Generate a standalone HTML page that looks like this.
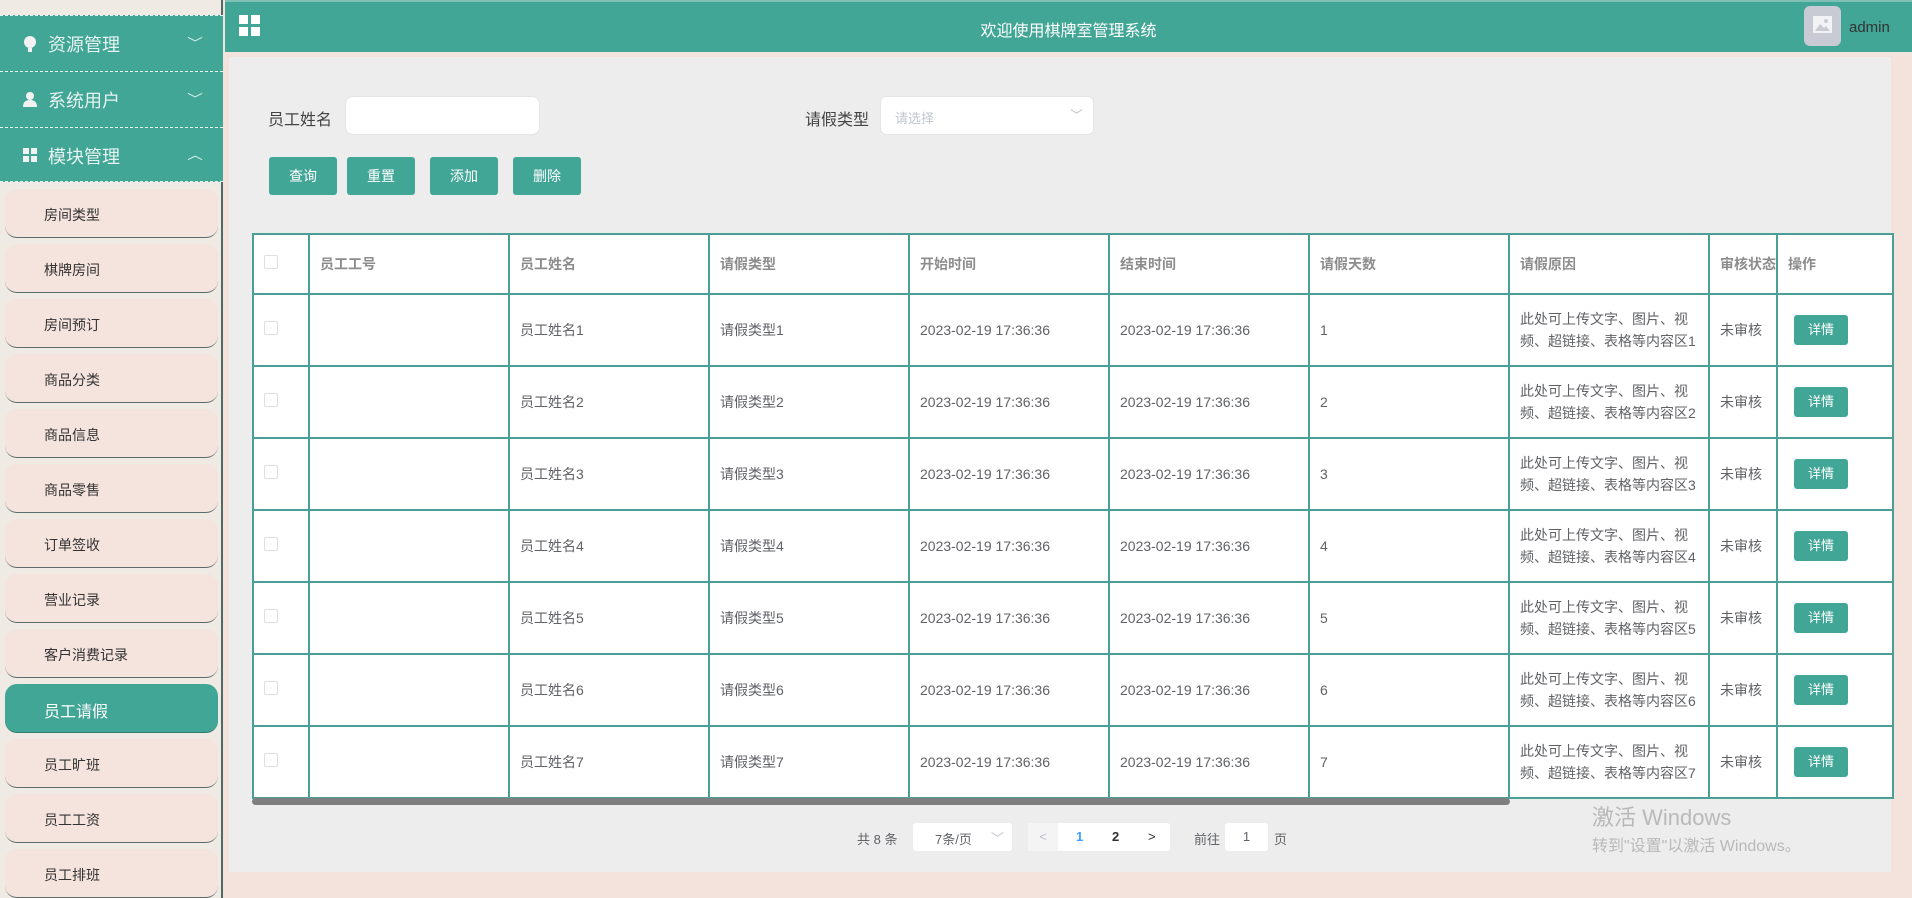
<!DOCTYPE html>
<html><head><meta charset="utf-8"><style>
*{box-sizing:border-box;margin:0;padding:0}
body{width:1912px;height:898px;overflow:hidden;font-family:"Liberation Sans","Noto Sans CJK SC",sans-serif;background:#f4e2dc;position:relative;color:#606266}
.side{position:absolute;left:0;top:0;width:223px;height:898px;background:#efeae3;border-right:2px solid #4d6a66}
.mh{position:absolute;left:0;width:223px;height:56px;background:#42a697;color:#e6f2ef;font-size:18px;border-top:1px dashed #e8f4f1}
.mh span{position:absolute;left:48px;top:15px}
.mh i{position:absolute;left:22px;top:19px;width:16px;height:16px}
.mh b{position:absolute;right:22px;top:18px;font-weight:normal;font-size:12px;transform:scaleX(1.3)}
.sub{position:absolute;left:5px;width:213px;height:49px;background:#f5e3dd;border-radius:12px;border-bottom:1.5px solid #5c6c6a;font-size:14px;color:#333}
.sub span{position:absolute;left:39px;top:16px}
.sub.act{background:#42a697;color:#fff;font-size:16px;border-bottom:1.5px solid #35796f}
.sub.act span{top:14px}
.top{position:absolute;left:225px;top:0;width:1687px;height:52px;background:#42a697;border-top:2px solid #7fbfb5}
.title{position:absolute;left:0;width:1687px;top:15px;text-align:center;color:#fff;font-size:16px}
.panel{position:absolute;left:229px;top:57px;width:1662px;height:815px;background:#ededed}
.lbl{position:absolute;font-size:16px;color:#444}
.inp{position:absolute;background:#fff;border:1px solid #e4e4e4;border-radius:8px}
.btn{position:absolute;top:157px;height:38px;width:68px;background:#42a697;color:#fff;font-size:14px;text-align:center;line-height:38px;border-radius:3px}
table{position:absolute;left:252px;top:233px;border-collapse:collapse;background:#fff;font-size:14px;table-layout:fixed}
td{border:2px solid #4a9f96;height:72px;padding-left:10px;vertical-align:middle;color:#606266;line-height:22px;white-space:nowrap;overflow:hidden}
tr.h td{height:60px;color:#8c8c8c;font-weight:bold}
.cb{display:inline-block;width:14px;height:14px;border:1px solid #dcdfe6;border-radius:2px;background:#fff}
.det{display:inline-block;background:#42a697;color:#fff;font-size:13px;width:54px;height:30px;line-height:30px;text-align:center;border-radius:3px;margin-left:6px}
.pg{position:absolute;top:825px;font-size:13px;color:#606266}
.wm{position:absolute;left:1592px;color:#b9b9b9}
</style></head><body>
<div class="side">
<div class="mh" style="top:15px"><i><svg width="16" height="18" viewBox="0 0 16 18"><circle cx="8" cy="7" r="6" fill="#f2f2f2"/><rect x="6" y="13" width="4" height="4" fill="#f2f2f2"/></svg></i><span>资源管理</span><b>﹀</b></div>
<div class="mh" style="top:71px"><i><svg width="16" height="16" viewBox="0 0 16 16"><circle cx="8" cy="5" r="4" fill="#f2f2f2"/><path d="M1 16 Q1 9 8 9 Q15 9 15 16Z" fill="#f2f2f2"/></svg></i><span>系统用户</span><b>﹀</b></div>
<div class="mh" style="top:127px;height:55px;border-bottom:1px dashed #e8f4f1"><i><svg width="16" height="16"><rect x="1" y="1" width="6" height="6" fill="#f2f2f2"/><rect x="9" y="1" width="6" height="6" fill="#f2f2f2"/><rect x="1" y="9" width="6" height="6" fill="#f2f2f2"/><rect x="9" y="9" width="6" height="6" fill="#f2f2f2"/></svg></i><span>模块管理</span><b>︿</b></div>
<div class="sub" style="top:189px"><span>房间类型</span></div>
<div class="sub" style="top:244px"><span>棋牌房间</span></div>
<div class="sub" style="top:299px"><span>房间预订</span></div>
<div class="sub" style="top:354px"><span>商品分类</span></div>
<div class="sub" style="top:409px"><span>商品信息</span></div>
<div class="sub" style="top:464px"><span>商品零售</span></div>
<div class="sub" style="top:519px"><span>订单签收</span></div>
<div class="sub" style="top:574px"><span>营业记录</span></div>
<div class="sub" style="top:629px"><span>客户消费记录</span></div>
<div class="sub act" style="top:684px"><span>员工请假</span></div>
<div class="sub" style="top:739px"><span>员工旷班</span></div>
<div class="sub" style="top:794px"><span>员工工资</span></div>
<div class="sub" style="top:849px"><span>员工排班</span></div>
</div>
<div class="top">
<svg style="position:absolute;left:14px;top:13px" width="22" height="22"><rect x="0" y="0" width="9" height="9" fill="#fff"/><rect x="12" y="0" width="9" height="9" fill="#fff"/><rect x="0" y="12" width="9" height="9" fill="#fff"/><rect x="12" y="12" width="9" height="9" fill="#fff"/></svg>
<div class="title">欢迎使用棋牌室管理系统</div>
<div style="position:absolute;left:1579px;top:4px;width:37px;height:40px;background:#c8cbd3;border-radius:6px"><svg style="position:absolute;left:9px;top:10px" width="19" height="17"><rect x="0" y="0" width="19" height="17" fill="#f3f3f5"/><path d="M2 15 L7 8 L11 12 L13 10 L17 15Z" fill="#c8cbd3"/><circle cx="13" cy="5" r="2" fill="#c8cbd3"/></svg></div>
<div style="position:absolute;left:1624px;top:17px;font-size:15px;color:#333">admin</div>
</div>
<div class="panel"></div>
<div class="lbl" style="left:268px;top:106px">员工姓名</div>
<div class="inp" style="left:345px;top:96px;width:195px;height:39px"></div>
<div class="lbl" style="left:805px;top:106px">请假类型</div>
<div class="inp" style="left:880px;top:96px;width:214px;height:39px;border-radius:6px"><span style="position:absolute;left:14px;top:11px;font-size:13px;color:#c0c4cc">请选择</span><span style="position:absolute;right:10px;top:8px;font-size:13px;color:#c0c4cc">﹀</span></div>
<div class="btn" style="left:269px">查询</div>
<div class="btn" style="left:347px">重置</div>
<div class="btn" style="left:430px">添加</div>
<div class="btn" style="left:513px">删除</div>
<table>
<colgroup><col style="width:56px"><col style="width:200px"><col style="width:200px"><col style="width:200px"><col style="width:200px"><col style="width:200px"><col style="width:200px"><col style="width:200px"><col style="width:60px"><col style="width:116px"></colgroup>
<tr class="h"><td><span class="cb"></span></td><td>员工工号</td><td>员工姓名</td><td>请假类型</td><td>开始时间</td><td>结束时间</td><td>请假天数</td><td>请假原因</td><td>审核状态</td><td>操作</td></tr>
<tr><td><span class="cb"></span></td><td></td><td>员工姓名1</td><td>请假类型1</td><td>2023-02-19 17:36:36</td><td>2023-02-19 17:36:36</td><td>1</td><td>此处可上传文字、图片、视<br>频、超链接、表格等内容区1</td><td>未审核</td><td><span class="det">详情</span></td></tr>
<tr><td><span class="cb"></span></td><td></td><td>员工姓名2</td><td>请假类型2</td><td>2023-02-19 17:36:36</td><td>2023-02-19 17:36:36</td><td>2</td><td>此处可上传文字、图片、视<br>频、超链接、表格等内容区2</td><td>未审核</td><td><span class="det">详情</span></td></tr>
<tr><td><span class="cb"></span></td><td></td><td>员工姓名3</td><td>请假类型3</td><td>2023-02-19 17:36:36</td><td>2023-02-19 17:36:36</td><td>3</td><td>此处可上传文字、图片、视<br>频、超链接、表格等内容区3</td><td>未审核</td><td><span class="det">详情</span></td></tr>
<tr><td><span class="cb"></span></td><td></td><td>员工姓名4</td><td>请假类型4</td><td>2023-02-19 17:36:36</td><td>2023-02-19 17:36:36</td><td>4</td><td>此处可上传文字、图片、视<br>频、超链接、表格等内容区4</td><td>未审核</td><td><span class="det">详情</span></td></tr>
<tr><td><span class="cb"></span></td><td></td><td>员工姓名5</td><td>请假类型5</td><td>2023-02-19 17:36:36</td><td>2023-02-19 17:36:36</td><td>5</td><td>此处可上传文字、图片、视<br>频、超链接、表格等内容区5</td><td>未审核</td><td><span class="det">详情</span></td></tr>
<tr><td><span class="cb"></span></td><td></td><td>员工姓名6</td><td>请假类型6</td><td>2023-02-19 17:36:36</td><td>2023-02-19 17:36:36</td><td>6</td><td>此处可上传文字、图片、视<br>频、超链接、表格等内容区6</td><td>未审核</td><td><span class="det">详情</span></td></tr>
<tr><td><span class="cb"></span></td><td></td><td>员工姓名7</td><td>请假类型7</td><td>2023-02-19 17:36:36</td><td>2023-02-19 17:36:36</td><td>7</td><td>此处可上传文字、图片、视<br>频、超链接、表格等内容区7</td><td>未审核</td><td><span class="det">详情</span></td></tr>
</table>
<div style="position:absolute;left:252px;top:798px;width:1258px;height:7px;background:#7f7f7f;border-radius:4px"></div>
<div class="pg" style="left:857px;top:829px">共 8 条</div>
<div style="position:absolute;left:913px;top:823px;width:99px;height:28px;background:#fff;border-radius:3px;font-size:13px"><span style="position:absolute;left:22px;top:6px">7条/页</span><span style="position:absolute;right:8px;top:5px;color:#c0c4cc">﹀</span></div>
<div style="position:absolute;left:1028px;top:823px;width:142px;height:28px;background:#fff;border-radius:3px;font-size:13px;font-weight:bold">
<span style="position:absolute;left:0;top:0;width:30px;height:28px;background:#f4f4f5;color:#c0c4cc;text-align:center;line-height:28px;font-weight:normal">&lt;</span>
<span style="position:absolute;left:48px;top:6px;color:#409eff">1</span>
<span style="position:absolute;left:84px;top:6px;color:#303133">2</span>
<span style="position:absolute;left:120px;top:6px;color:#303133;font-weight:normal">&gt;</span></div>
<div class="pg" style="left:1194px;top:829px">前往</div>
<div style="position:absolute;left:1225px;top:823px;width:43px;height:28px;background:#fff;border-radius:3px;font-size:13px;text-align:center;line-height:28px">1</div>
<div class="pg" style="left:1274px;top:829px">页</div>
<div class="wm" style="top:800px;font-size:22px">激活 Windows</div>
<div class="wm" style="top:832px;font-size:16px">转到"设置"以激活 Windows。</div>
</body></html>
